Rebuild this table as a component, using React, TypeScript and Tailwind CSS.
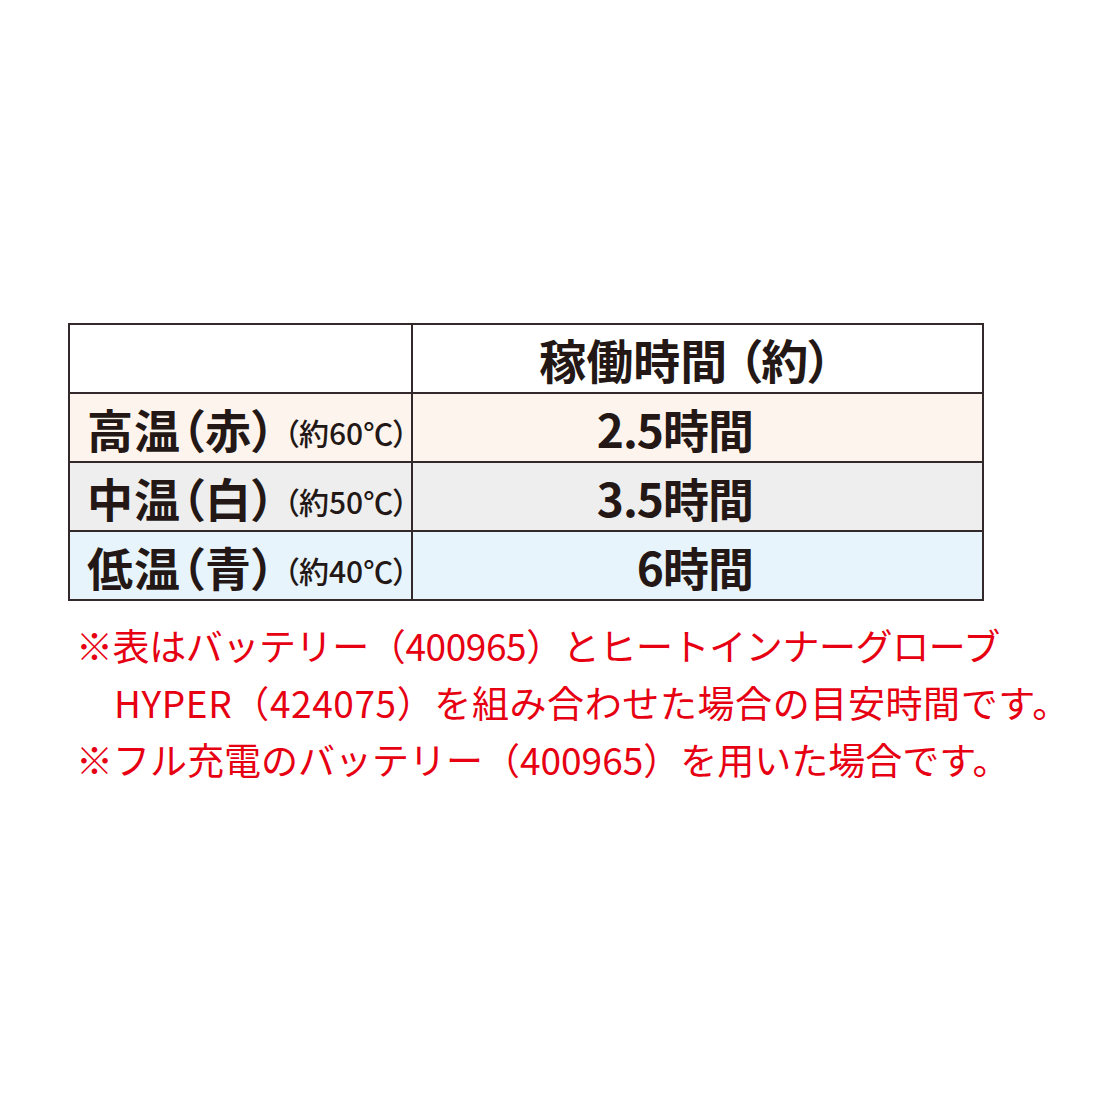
const rows = [
  { label: "高温", color: "赤", temp: "60", time: "2.5時間", bg: "bg-[#fdf4ee]" },
  { label: "中温", color: "白", temp: "50", time: "3.5時間", bg: "bg-[#efeeee]" },
  { label: "低温", color: "青", temp: "40", time: "6時間", bg: "bg-[#e8f4fc]" },
];

const font = { fontFamily: '"Noto Sans CJK JP", "Noto Sans", sans-serif' };

export default function App() {
  return (
    <div className="w-[1100px] h-[1100px] bg-white text-[#231815]" style={font}>
      <div className="pt-[323px] pl-[68px]">
        <div className="w-[916px] border-2 border-[#33282a]">
          {/* header */}
          <div className="grid grid-cols-[343px_1fr] h-[67px]">
            <div className="border-r-2 border-[#33282a]" />
            <div className="flex items-center justify-center pr-[24px] text-[47px] font-bold leading-none [font-feature-settings:'palt']">
              稼働時間 （約）
            </div>
          </div>
          {rows.map((r) => (
            <div
              key={r.label}
              className={`grid grid-cols-[343px_1fr] h-[69px] border-t-2 border-[#33282a] ${r.bg}`}
            >
              <div className="flex items-center gap-[8px] pl-[17px] border-r-2 border-[#33282a] leading-none [font-feature-settings:'palt'] whitespace-nowrap">
                <span className="text-[46px] font-bold tracking-[1px]">
                  {r.label}（{r.color}）
                </span>
                <span className="text-[30px] font-medium mt-[8px]">
                  （約{r.temp}℃）
                </span>
              </div>
              <div className="flex items-center justify-end pr-[229px] text-[46px] font-bold leading-none tracking-[-1px]">
                {r.time}
              </div>
            </div>
          ))}
        </div>
      </div>
      <div className="mt-[16px] pl-[76px] text-[#e60012] text-[37px] leading-[57px] whitespace-nowrap">
        <div className="tracking-[-0.4px]">※表はバッテリー（400965）とヒートインナーグローブ</div>
        <div className="pl-[38px] tracking-[0.6px]">HYPER（424075）を組み合わせた場合の目安時間です。</div>
        <div>※フル充電のバッテリー（400965）を用いた場合です。</div>
      </div>
    </div>
  );
}
